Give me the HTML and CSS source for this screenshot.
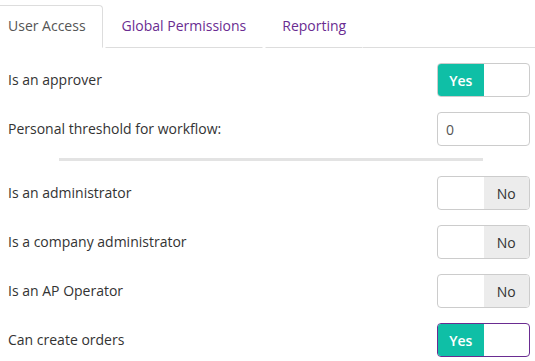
FILE: index.html
```html
<!DOCTYPE html>
<html>
<head>
<meta charset="utf-8">
<link rel="stylesheet" href="styles.css">
</head>
<body>
<div class="page">
  <ul class="tabs">
    <li class="tab active">User Access</li>
    <li class="tab">Global Permissions</li>
    <li class="tab">Reporting</li>
    <li class="tab-fill"></li>
  </ul>
  <div class="panel">
    <div class="row">
      <span class="label">Is an approver</span>
      <div class="toggle on"><span class="yes">Yes</span><span class="blank"></span></div>
    </div>
    <div class="row">
      <span class="label">Personal threshold for workflow:</span>
      <input class="num" type="text" value="0">
    </div>
    <div class="divider"></div>
    <div class="row">
      <span class="label">Is an administrator</span>
      <div class="toggle off"><span class="blank"></span><span class="no">No</span></div>
    </div>
    <div class="row">
      <span class="label">Is a company administrator</span>
      <div class="toggle off"><span class="blank"></span><span class="no">No</span></div>
    </div>
    <div class="row">
      <span class="label">Is an AP Operator</span>
      <div class="toggle off"><span class="blank"></span><span class="no">No</span></div>
    </div>
    <div class="row">
      <span class="label">Can create orders</span>
      <div class="toggle on focus"><span class="yes">Yes</span><span class="blank"></span></div>
    </div>
  </div>
</div>
</body>
</html>
```
FILE: styles.css
```css
html, body {
  margin: 0;
  padding: 0;
  background: #fff;
}
body {
  font-family: "Open Sans", "DejaVu Sans", sans-serif;
  font-size: 14px;
  color: #333;
  overflow: hidden;
}
.page {
  width: 535px;
}
.tabs {
  display: flex;
  list-style: none;
  margin: 0;
  padding: 5px 0 0 0;
  margin-left: -9px;
}
.tab {
  padding: 0 16px;
  height: 41px;
  line-height: 40px;
  border: 1px solid transparent;
  border-bottom: 1px solid #ddd;
  margin-right: 2px;
  color: #6a2c91;
  border-radius: 4px 4px 0 0;
}
.tab.active {
  color: #555;
  border-color: #ddd;
  border-bottom-color: transparent;
}
.tab-fill {
  flex: 1;
  border-bottom: 1px solid #ddd;
  margin-left: -2px;
}
.panel {
  padding: 15px 5px 0 8px;
}
.row {
  display: flex;
  align-items: center;
  justify-content: space-between;
  height: 34px;
  margin-bottom: 15px;
}
.label {
  margin-top: -2px;
}
.toggle {
  display: flex;
  width: 91px;
  height: 32px;
  border: 1px solid #ccc;
  border-radius: 4px;
  overflow: hidden;
}
.toggle span {
  flex: 1;
  display: flex;
  align-items: center;
  justify-content: center;
}
.toggle .yes {
  background: #0fbfa6;
  color: #fff;
  font-weight: 600;
}
.toggle .no {
  background: #ececec;
  color: #333;
}
.toggle.focus {
  border-color: #6a2c91;
}
.num {
  box-sizing: border-box;
  width: 93px;
  height: 34px;
  border: 1px solid #ccc;
  border-radius: 4px;
  padding: 0 8px;
  font-family: "Open Sans", "DejaVu Sans", sans-serif;
  font-size: 14px;
  color: #555;
  margin: 0;
}
.divider {
  height: 3px;
  background: #e3e3e3;
  margin: -3px 47px 15px 51px;
}
```
